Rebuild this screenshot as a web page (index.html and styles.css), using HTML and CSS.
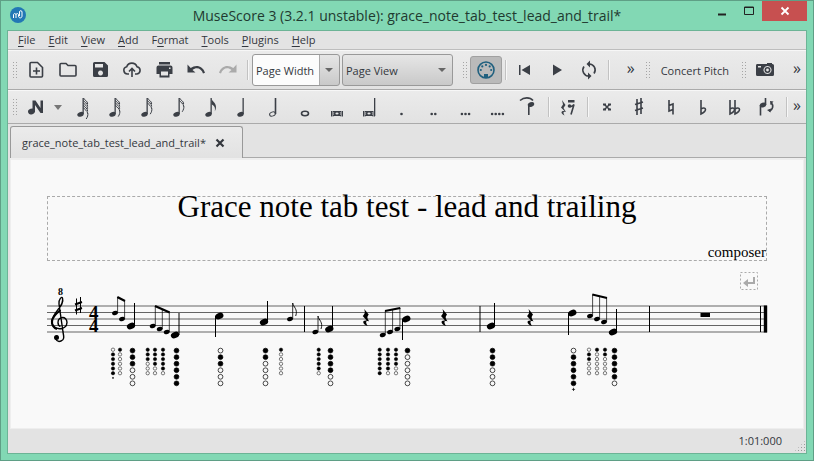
FILE: index.html
```html
<!DOCTYPE html>
<html lang="en">
<head>
<meta charset="utf-8">
<title>MuseScore 3</title>
<link rel="stylesheet" href="styles.css">
</head>
<body>
<svg class="defs" aria-hidden="true">
  <defs>
    <g id="q"><ellipse cx="9.500" cy="17.300" rx="3.300" ry="2.300" transform="rotate(-20 9.500 17.300)"/><path d="M11.500 1h1.300v16h-1.300z"/></g>
    <path id="flag" d="M0 0c.5 3 4.500 4 4.500 8.500 0 1.500-.5 3-1.200 4.200 1-4.500-1.300-6-3.300-7z"/>
    <path id="thinflag" d="M0 0c1 2.500 4 2.500 4.200 6" fill="none" stroke="#3b3f46" stroke-width="1"/>
    <path id="sharp" d="M3 2v16M7 1v16M1 7.500l8-2.500M1 13.500l8-2.500"/>
    <path id="flat" d="M2 2v14c3-1.500 4.500-2.500 4.500-4.500s-2.500-2-4.500-.5"/>
  </defs>
</svg>

<header class="titlebar">
  <svg class="logo" viewBox="0 0 16 16"><circle cx="8" cy="8" r="8" fill="#2277b5"/><path d="M3.500 11V8c0-2 2.500-2 2.500 0v3M6 8c0-2 2.500-2 2.500 0v1c0 2.500 3.500 2.500 3.500 0V5c0-1.800-2.500-1.800-2.500 0v4" fill="none" stroke="#fff"/></svg>
  <h1 class="caption">MuseScore 3 (3.2.1 unstable): grace_note_tab_test_lead_and_trail*</h1>
  <div class="winbuttons">
    <button class="winbtn" aria-label="Minimize"><svg width="10" height="10"><path d="M1 8.500h8" stroke="#222" stroke-width="2"/></svg></button>
    <button class="winbtn" aria-label="Maximize"><svg width="10" height="10"><path d="M.5 1h9v7.500h-9zM0 1.500h10" fill="none" stroke="#222"/></svg></button>
    <button class="winbtn close" aria-label="Close"><svg width="10" height="10"><path d="M1.500 1.500l7 7M8.500 1.500l-7 7" stroke="#fff" stroke-width="1.800"/></svg></button>
  </div>
</header>

<main class="client">
  <nav class="menu">
    <button><u>F</u>ile</button><button><u>E</u>dit</button><button><u>V</u>iew</button><button><u>A</u>dd</button><button>F<u>o</u>rmat</button><button><u>T</u>ools</button><button><u>P</u>lugins</button><button><u>H</u>elp</button>
  </nav>

  <div class="toolbar file-tools">
    <span class="grip"></span>
    <button class="tool" aria-label="New"><svg viewBox="0 0 20 20"><path class="line" d="M5 2.500h6.500l5 5V16q0 1-1 1h-10.500q-1 0-1-1V3.500q0-1 1-1zM10.500 7.500v7M7 11h7"/></svg></button>
    <button class="tool" aria-label="Open"><svg viewBox="0 0 20 20"><path class="line" d="M2 4.500q0-1 1-1h5l2 2h7q1 0 1 1V15q0 1-1 1H3q-1 0-1-1z"/></svg></button>
    <button class="tool" aria-label="Save"><svg viewBox="0 0 20 20"><path fill-rule="evenodd" d="M4.500 2h10l3.500 3.500v10q0 1.500-1.500 1.500h-12Q3 17 3 15.500v-12q0-1.500 1.500-1.500zM5 4V7.500h8V4zm5.500 6.500a2.500 2.500 0 1 0 .01 0z"/></svg></button>
    <button class="tool" aria-label="Save online"><svg viewBox="0 0 20 20"><path class="line" d="M7 14H5.500a3.700 3.700 0 0 1-.8-7.300 5.500 5.500 0 0 1 10.300 0A3.700 3.700 0 0 1 15 14h-2M10 17V8.500M7 11.500l3-3 3 3"/></svg></button>
    <button class="tool" aria-label="Print"><svg viewBox="0 0 20 20"><path d="M5 2h11v2.500H5z"/><path fill-rule="evenodd" d="M4.500 5.500h12q2 0 2 2v6.500h-3v3.500h-10v-3.500h-3V7.500q0-2 2-2zM7 11.500v4h7v-4zM15 7.500v1.500h1.500V7.500z"/></svg></button>
    <button class="tool" aria-label="Undo"><svg viewBox="0 0 20 20"><path d="M1.500 4.500v8h8L6.500 10c4-3.500 9-1.500 10.500 3.500l2-.8C17 6 10 4 4.700 8z"/></svg></button>
    <button class="tool off" aria-label="Redo"><svg viewBox="0 0 20 20"><path d="M18.500 4.500v8h-8l3-2.500C9.500 6.500 4.500 8.500 3 13.500l-2-.8C3 6 10 4 15.300 8z"/></svg></button>
    <span class="sep"></span>
    <span class="combo zoom-box"><select aria-label="Zoom"><option>Page Width</option></select></span>
    <span class="combo view-box"><select aria-label="View mode"><option>Page View</option></select></span>
    <span class="grip midi-grip"></span>
    <button class="tool pressed" aria-label="MIDI input"><svg viewBox="0 0 20 20"><circle class="line" cx="10" cy="10" r="8"/><g><circle cx="4.800" cy="10" r="1.100"/><circle cx="6.300" cy="6.400" r="1.100"/><circle cx="10" cy="4.900" r="1.100"/><circle cx="13.700" cy="6.400" r="1.100"/><circle cx="15.200" cy="10" r="1.100"/><path d="M8 14h4v4H8z"/></g></svg></button>
    <span class="sep"></span>
    <button class="tool" aria-label="Rewind"><svg viewBox="0 0 20 20"><path d="M4 5h1.500v10H4zM15 5v10l-8.500-5z"/></svg></button>
    <button class="tool" aria-label="Play"><svg viewBox="0 0 20 20"><path d="M6 4.500v11l9-5.500z"/></svg></button>
    <button class="tool" aria-label="Loop"><svg viewBox="0 0 20 20"><path class="line" d="M10 4a6 6 0 0 1 5 9.500M10 16a6 6 0 0 1-5-9.500"/><path d="M11 .5v7L7.500 4zM9 12.500v7l3.500-3.500z"/></svg></button>
    <span class="sep"></span>
    <button class="more push">»</button>
    <span class="grip"></span>
    <button class="pitch">Concert Pitch</button>
    <span class="grip"></span>
    <button class="tool" aria-label="Image capture"><svg viewBox="0 0 20 20"><path fill-rule="evenodd" d="M2 4h10V3h5v1h.5q1.500 0 1.500 1.500v9q0 1.500-1.500 1.500h-15Q1 16 1 14.500v-9q0-1.500 1-1.500zM12.500 6a4 4 0 1 0 .01 0zM3 6v1.500h3V6z"/><circle class="line" cx="12.500" cy="10" r="2.200"/></svg></button>
    <button class="more last">»</button>
  </div>

  <div class="toolbar note-tools">
    <span class="grip"></span>
    <button class="tool" aria-label="Note input"><svg viewBox="0 0 20 20"><ellipse cx="5.500" cy="14.500" rx="3.500" ry="2.800" transform="rotate(-20 5.500 14.500)"/><path d="M6.500 3.500h3l5 7.500V3.500H17V16h-2.500L9 8v7H6.500z"/></svg></button>
    <button class="arrow" aria-label="Note input mode"><svg width="8" height="5"><path d="M0 0h8L4 5z"/></svg></button>
    <span class="notes" id="durations"></span>
    <span class="sep"></span>
    <button class="tool" aria-label="Rest"><svg viewBox="0 0 20 20"><path d="M4 3l3.500 5-2 3 2.500 4c-3-1-3 .5-1.500 3.500-4-2-4-5 0-4.500L3 10.500l2-3zM10 3h6.500v2.500H10z"/><path class="line" d="M11 8.500c1 2 3 1 5-1l-3 10"/><circle cx="11.500" cy="9" r="1.800"/></svg></button>
    <span class="sep"></span>
    <button class="tool" aria-label="Double sharp"><svg viewBox="0 0 20 20"><path d="M7.500 7.500l5 5M12.500 7.500l-5 5" stroke="#3b3f46" stroke-width="1.500"/><path d="M6 6.500h3v2H6zM11 6.500h3v2h-3zM6 11.500h3v2H6zM11 11.500h3v2h-3z"/></svg></button>
    <button class="tool" aria-label="Sharp"><svg viewBox="0 0 20 20"><use class="line" href="#sharp" x="5" y="0"/></svg></button>
    <button class="tool" aria-label="Natural"><svg viewBox="0 0 20 20"><path class="line" d="M8 3v11l4-1.500M12 17.500V7L8 8.500"/></svg></button>
    <button class="tool" aria-label="Flat"><svg viewBox="0 0 20 20"><use class="line" href="#flat" x="6" y="1"/></svg></button>
    <button class="tool" aria-label="Double flat"><svg viewBox="0 0 20 20"><use class="line" href="#flat" x="3" y="1"/><use class="line" href="#flat" x="8" y="1"/></svg></button>
    <button class="tool" aria-label="Flip direction"><svg viewBox="0 0 20 20"><ellipse cx="6" cy="8" rx="3.300" ry="2.300" transform="rotate(-20 6 8)"/><path class="line" d="M8.500 1v7M3.500 8v10.500"/><path class="line" d="M14 6c3 2 2 7-2 8"/><path d="M13 4l3.500.5-3 3.500zM10 13l4-1.500-.5 4z"/></svg></button>
    <span class="sep"></span>
    <button class="more push">»</button>
  </div>

  <div class="tabs">
    <div class="tab"><span>grace_note_tab_test_lead_and_trail*</span><button class="tab-close" aria-label="Close tab"><svg width="10" height="10"><path d="M1.500 1.500l7 7M8.500 1.500l-7 7" stroke="#33373d" stroke-width="2.200"/></svg></button></div>
    <div class="tab-rest"></div>
  </div>

  <section class="page">
    <div class="frame">
      <h2>Grace note tab test - lead and trailing</h2>
      <p>composer</p>
    </div>
    <div class="break"><svg width="18" height="18" viewBox="0 0 18 18"><rect x=".5" y=".5" width="17" height="17" fill="none" stroke="#aaa" stroke-dasharray="2 2"/><path d="M14 5v6H7" fill="none" stroke="#aaa" stroke-width="2"/><path d="M3 11l5-4v8z" fill="#aaa"/></svg></div>
    <svg class="score" id="score" viewBox="47 286 720 110" role="img" aria-label="Score"></svg>
  </section>

  <footer class="status"><span>1:01:000</span><span class="resize"></span></footer>
</main>
<script src="score.js"></script>
</body>
</html>
```
FILE: styles.css
```css
* { box-sizing: border-box; }
body {
  margin: 0;
  height: 100vh;
  display: flex;
  flex-direction: column;
  padding: 0 6px 6px;
  border: 1px solid #5f9f86;
  background: #82d8b4;
  font-family: "Open Sans", "Noto Sans", sans-serif;
  font-size: 11px;
  color: #33373d;
}
button {
  margin: 0;
  padding: 0;
  border: 0;
  background: none;
  font: inherit;
  color: inherit;
}
svg { display: block; overflow: visible; }
.defs { position: absolute; width: 0; height: 0; }

.titlebar { display: flex; height: 29px; flex: none; align-items: flex-start; }
.logo { width: 16px; height: 16px; margin: 6px 0 0 3px; }
.caption {
  flex: 1;
  margin: 0;
  padding-left: 80px;
  text-align: center;
  font-size: 14px;
  line-height: 29px;
  font-weight: 400;
  color: #1f3a30;
  white-space: nowrap;
}
.winbuttons { display: flex; }
.winbtn { width: 27px; height: 20px; display: grid; place-items: center; }
.close { width: 45px; background: #c75050; }

.client {
  flex: 1;
  min-height: 0;
  display: flex;
  flex-direction: column;
  border: 1px solid #6cb496;
  background: #e3e3e3;
}
.menu { display: flex; flex: none; height: 19px; gap: 13px; padding-left: 10px; border-bottom: 1px solid #bdbdbd; }
.menu button { line-height: 18px; }
.menu u { text-underline-offset: 2px; }

.toolbar {
  display: flex;
  flex: none;
  align-items: center;
  padding: 0 4px;
  border-top: 1px solid #f7f7f7;
  border-bottom: 1px solid #aaa;
  background: linear-gradient(#ebebeb, #e2e2e2);
}
.file-tools { height: 40px; }
.note-tools { height: 34px; }
.grip {
  flex: none;
  width: 6px;
  height: 18px;
  margin-right: 2px;
  background: radial-gradient(circle, #a5a5a5 1px, transparent 1px) 0 0 / 3px 3px;
}
.tool { flex: none; width: 32px; height: 28px; display: grid; place-items: center; }
.tool svg { width: 20px; height: 20px; fill: #3b3f46; }
.tool .line { fill: none; stroke: #3b3f46; stroke-width: 1.6px; }
.tool .thin { fill: none; stroke: #3b3f46; stroke-width: 1px; }
.off svg { fill: #aaa; }
.pressed { border: 1px solid #a0a0a0; border-radius: 3px; background: #bababa; }
.pressed svg { fill: #20607f; }
.pressed .line { stroke: #20607f; }
.sep { flex: none; width: 2px; height: 20px; margin: 0 2px 0 3px; border-left: 1px solid #c2c2c2; border-right: 1px solid #f7f7f7; }
.combo { position: relative; height: 32px; flex: none; }
.combo::after {
  content: "";
  position: absolute;
  right: 7px;
  top: 14px;
  border: 4px solid transparent;
  border-top-color: #666;
  border-bottom: 0;
}
.combo select {
  appearance: none;
  width: 100%;
  height: 100%;
  padding: 0 3px;
  border: 1px solid #999;
  border-radius: 3px;
  background: linear-gradient(#e6e6e6, #c9c9c9);
  font: inherit;
  color: inherit;
}
.zoom-box { width: 88px; margin-left: 1px; }
.zoom-box select { background: linear-gradient(90deg, #fcfcfc 66px, #aaa 66px, #aaa 67px, transparent 67px), linear-gradient(#e6e6e6, #c9c9c9); }
.view-box { width: 111px; margin-left: 2px; }
.midi-grip { margin-left: 9px; }
.more { width: 10px; font-size: 16px; line-height: 20px; padding-bottom: 5px; }
.push { margin-left: auto; }
.file-tools .push { margin-right: 9px; }
.last { margin-left: 11px; }
.pitch { margin: 0 12px 0 8px; white-space: nowrap; }
.arrow { width: 13px; padding-left: 2px; fill: #777; }
.notes { display: flex; }

.tabs { display: flex; flex: none; height: 34px; padding: 2px 0 0 2px; }
.tab {
  display: flex;
  align-items: center;
  gap: 9px;
  padding: 0 17px 0 11px;
  border: 1px solid #999;
  border-bottom: 0;
  border-radius: 3px 3px 0 0;
  background: linear-gradient(#ebebeb, #e2e2e2);
}
.tab-rest { flex: 1; border-bottom: 1px solid #aaa; }
.tab-close { width: 10px; height: 10px; }

.page { flex: 1; min-height: 0; margin: 0 2px; padding: 36px 36px 0; background: #f9f9f9; color: #000; border: 1px solid #eee; border-top-width: 2px; }
.frame { display: flex; flex-direction: column; justify-content: space-between; height: 65px; border: 1px dashed #aaa; font-family: "Liberation Serif", serif; }
.frame h2 { margin: 0; text-align: center; font-size: 31px; line-height: 20px; font-weight: 400; }
.frame p { margin: 0; text-align: right; font-size: 15px; line-height: 15px; }
.break { display: flex; justify-content: flex-end; padding: 11px 9px 0 0; height: 25px; }
.score { width: 100%; height: auto; font-family: "Liberation Serif", serif; font-weight: 700; }

.status { display: flex; flex: none; height: 24px; padding-bottom: 1px; align-items: center; justify-content: flex-end; }
.resize { align-self: flex-end; width: 12px; height: 12px; margin-left: 12px; clip-path: polygon(100% 0, 100% 100%, 0 100%); background: radial-gradient(circle, #999 1px, transparent 1px) 0 0 / 3px 3px; }
```
FILE: score.js
```js
const draw = [];
const add = (s) => draw.push(s);
const line = (x1, y1, x2, y2, w, c = "#000") =>
  add(`<path d="M${x1} ${y1}L${x2} ${y2}" stroke="${c}" stroke-width="${w}"/>`);
const head = (x, y, rx, ry) =>
  add(`<ellipse cx="${x}" cy="${y}" rx="${rx}" ry="${ry}" transform="rotate(-22 ${x} ${y})"/>`);

// Staff and bar lines
[306, 312.5, 319, 325.5, 332].forEach((y) => line(47, y, 767, y, 0.6));
[304.5, 480, 649.5, 760.5].forEach((x) => line(x, 306, x, 332, 1));
line(765.5, 305.5, 765.5, 332.5, 3.4);

// Clef, key and time signature
add('<text x="58" y="295" font-size="10">8</text>');
add('<path d="M61 341c-5 2-8-6-3-4.500M61 341c3.500-1 3-4 2-9l-4-28c-.5-5 3-8 3.500-6 2.500 8-10 14-10.500 23-.3 10 15 10 15 1.500 0-7-9-6.500-9 0 0 2 1 3.500 2.500 4" fill="none" stroke="#000" stroke-width="1.400"/><path d="M60.500 310c-5 4-8 7-8.500 11-.5 4 2 7 5 8" fill="none" stroke="#000" stroke-width="2.200"/><circle cx="56.500" cy="337.500" r="2.500"/>');
add('<path d="M76.500 298.500v16M80.500 297v16" stroke="#000" stroke-width="1"/><path d="M75 304.500l7-2.500M75 310.500l7-2.500" stroke="#000" stroke-width="2"/>');
add('<text x="89" y="319" font-size="19">4</text><text x="89" y="332" font-size="19">4</text>');

// Full-size notes: head x, head y, stem x, stem end
[[131, 326, 134.5, 303], [175, 335, 179, 313], [219.3, 316, 215.5, 337], [264, 322, 267.5, 301],
 [329.3, 329, 332.5, 306], [406.3, 319, 402.5, 340], [491, 326, 494.5, 303],
 [572.3, 313, 568.5, 335], [613, 332, 616.5, 309]]
  .forEach(([x, y, sx, sy]) => { head(x, y, 4.3, 3.1); line(sx, y, sx, sy, 1); });

// Grace notes, beamed in groups: heads, then beam start and end heights
[[[[115, 313], [122, 319]], 297, 301],
 [[[152.7, 326], [159.7, 329], [166.7, 332]], 306, 312.5],
 [[[382.7, 335], [390, 332], [397.3, 329]], 311, 308],
 [[[590, 316], [597, 319], [604, 322]], 294.5, 298]]
  .forEach(([heads, a, b]) => {
    heads.forEach(([x, y], i) => {
      head(x, y, 3, 2.1);
      line(x + 2.6, y, x + 2.6, a + (b - a) * i / (heads.length - 1), 0.7);
    });
    line(heads[0][0] + 2.3, a, heads[heads.length - 1][0] + 3, b, 2.2);
  });
[[290, 319], [315.3, 332]].forEach(([x, y]) => {
  head(x, y, 3, 2.1);
  line(x + 2.7, y, x + 2.7, y - 16, 0.8);
  add(`<path d="M${x + 2.7} ${y - 16}c.5 4 5.500 6 3 13" fill="none" stroke="#000" stroke-width=".9"/>`);
});

// Rests
[365.7, 444, 530].forEach((x) =>
  add(`<path transform="translate(${x} 309)" d="M-1.500 0L3 5.500C1 8 1.500 9 3.500 12.500c-3.500-1.500-4 .5-1.500 4.500-5.500-2-6-6-1-5.500L-3 7C-.5 4.500-.5 3.500-1.500 0z"/>`));
add('<path d="M700.500 313h9.500v4h-9.500z"/>');

// Fingering diagrams: x, size, holes from top (1 is closed), plus sign
[[113, 0, "011111", 1], [120, 0, "100000"], [132.5, 1, "111000"], [147.7, 0, "111000"],
 [155, 0, "111100"], [163, 0, "111110"], [176.5, 1, "111111"], [220.5, 1, "011000"],
 [265.5, 1, "110000"], [281, 0, "100000"], [318.7, 0, "111110"], [330.5, 1, "111100"],
 [379.7, 0, "111111"], [388, 0, "111110"], [396, 0, "111100"], [407.5, 1, "100000"],
 [492.5, 1, "111000"], [573.5, 1, "011111", 1], [589, 0, "011000"], [597, 0, "100000"],
 [605, 0, "110000"], [614.5, 1, "111110"]]
  .forEach(([x, big, holes, plus]) => {
    const step = big ? 6.55 : 4.7, top = big ? 350.6 : 349.7, r = big ? 2.4 : 1.7;
    [...holes].forEach((h, i) =>
      add(`<circle cx="${x}" cy="${top + i * step}" r="${r}" fill="${h === "1" ? "#000" : "none"}" stroke="#000" stroke-width="${big ? 0.7 : 0.5}"/>`));
    if (plus) {
      const y = top + 6 * step - (big ? 0.5 : 0), s = big ? 1.6 : 1;
      line(x - s, y, x + s, y, 0.7);
      line(x, y - s, x, y + s, 0.7);
    }
  });
document.getElementById("score").innerHTML = draw.join("");

// Duration buttons
const quarter = '<use href="#q"/>';
const flags = (n) => quarter + Array.from({ length: n }, (_, i) => `<use href="#thinflag" x="12.500" y="${1 + i * 2.4}"/>`).join("") +
  `<path class="thin" d="M16.700 ${n * 2.4 + 4}c.5 2-.2 4-1.500 6"/>`;
const eighth = quarter + '<use href="#flag" x="12.500" y="1.500"/>';
const hollow = '<ellipse class="line" cx="10" cy="16.500" rx="3.500" ry="2.200"/>';
const breve = '<ellipse class="line" cx="10" cy="16.500" rx="2.400" ry="1.800"/><path class="thin" d="M4.500 14v5.500M6 14v5.500M14 14v5.500M15.500 14v5.500M6 14.500h8M6 18.500h8"/>';
const dots = (n) => Array.from({ length: n }, (_, i) => `<circle cx="${10.5 + (i - (n - 1) / 2) * 3.6}" cy="17" r="1.300"/>`).join("");
const buttons = [
  ["128th", flags(5)], ["64th", flags(4)], ["32nd", flags(3)], ["16th", flags(2)], ["Eighth", eighth],
  ["Quarter", quarter],
  ["Half", '<ellipse class="thin" cx="9.500" cy="17" rx="3" ry="2" transform="rotate(-20 9.500 17)"/><path class="line" d="M12.500 1v16"/>'],
  ["Whole", hollow], ["Breve", breve], ["Longa", breve + '<path d="M15 1h1.300v18H15z"/>'],
  ["Dot", dots(1)], ["Double dot", dots(2)], ["Triple dot", dots(3)], ["Quadruple dot", dots(4)],
  ["Tie", '<path class="line" d="M1 3.500c4-3.500 10-3.500 13 0"/><ellipse cx="12" cy="7.500" rx="3.300" ry="2.300" transform="rotate(-20 12 7.500)"/><path d="M9 7h1.600v11H9z"/>'],
];
document.getElementById("durations").innerHTML = buttons
  .map(([name, art]) => `<button class="tool" aria-label="${name}"><svg viewBox="0 0 20 20">${art}</svg></button>`)
  .join("");
```
